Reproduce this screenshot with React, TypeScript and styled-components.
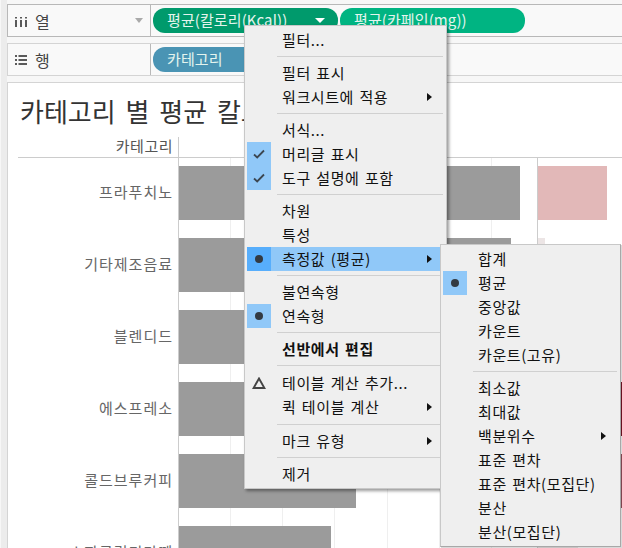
import React, { ReactElement } from 'react';
import styled, { createGlobalStyle } from 'styled-components';

const GlobalStyle = createGlobalStyle`
  html, body {
    margin: 0;
    padding: 0;
    background: #f5f5f5;
  }
  body {
    font-family: "Noto Sans CJK KR", "Noto Sans", sans-serif;
    font-size: 15px;
    overflow: hidden;
  }
`;

type MenuEntry =
  | { sep: true; before?: number; after?: number }
  | { sep?: false; label: string; mark?: 'check' | 'dot' | 'delta'; sub?: boolean; active?: boolean; bold?: boolean };

const mainMenu: MenuEntry[] = [
  { label: '필터...' },
  { sep: true },
  { label: '필터 표시' },
  { label: '워크시트에 적용', sub: true },
  { sep: true },
  { label: '서식...' },
  { label: '머리글 표시', mark: 'check' },
  { label: '도구 설명에 포함', mark: 'check' },
  { sep: true },
  { label: '차원' },
  { label: '특성' },
  { label: '측정값 (평균)', mark: 'dot', sub: true, active: true },
  { sep: true },
  { label: '불연속형' },
  { label: '연속형', mark: 'dot' },
  { sep: true },
  { label: '선반에서 편집', bold: true },
  { sep: true, after: 5 },
  { label: '테이블 계산 추가...', mark: 'delta' },
  { label: '퀵 테이블 계산', sub: true },
  { sep: true, before: 5 },
  { label: '마크 유형', sub: true },
  { sep: true },
  { label: '제거' },
];

const measureMenu: MenuEntry[] = [
  { label: '합계' },
  { label: '평균', mark: 'dot' },
  { label: '중앙값' },
  { label: '카운트' },
  { label: '카운트(고유)' },
  { sep: true },
  { label: '최소값' },
  { label: '최대값' },
  { label: '백분위수', sub: true },
  { label: '표준 편차' },
  { label: '표준 편차(모집단)' },
  { label: '분산' },
  { label: '분산(모집단)' },
];

const rows = [
  { name: '프라푸치노', width: 341, side: 69, sideColor: '#e2b8b8' },
  { name: '기타제조음료', width: 332, side: 7, sideColor: '#ece5e5' },
  { name: '블렌디드', width: 300, side: 40, sideColor: '#ece5e5' },
  { name: '에스프레소', width: 280, side: 90, sideColor: '#7a1525' },
  { name: '콜드브루커피', width: 177, side: 90, sideColor: '#96505c' },
  { name: '스파클링티라떼', width: 152, side: 40, sideColor: '#ece5e5' },
];

const MarkIcon = ({ mark }: { mark: 'check' | 'dot' | 'delta' }): ReactElement => {
  if (mark === 'check') {
    return (
      <svg width="14" height="12" viewBox="0 0 14 12">
        <path d="M2 6.5 L5.2 9.5 L12 2.5" fill="none" stroke="#3c4650" strokeWidth="1.8" />
      </svg>
    );
  }
  if (mark === 'dot') {
    return (
      <svg width="10" height="10" viewBox="0 0 10 10">
        <circle cx="5" cy="5" r="4" fill="#333a42" />
      </svg>
    );
  }
  return (
    <svg width="14" height="12" viewBox="0 0 14 12">
      <path d="M7 1.5 L12.4 11 L1.6 11 Z" fill="none" stroke="#444" strokeWidth="1.9" />
    </svg>
  );
};

const Menu = ({ entries }: { entries: MenuEntry[] }): ReactElement => (
  <>
    {entries.map((entry, i) =>
      entry.sep ? (
        <Separator key={i} $before={entry.before} $after={entry.after} />
      ) : (
        <Item key={i} $active={entry.active}>
          <MarkCell $on={!!entry.mark && entry.mark !== 'delta'} $active={entry.active}>
            {entry.mark && <MarkIcon mark={entry.mark} />}
          </MarkCell>
          <ItemLabel $bold={entry.bold}>{entry.label}</ItemLabel>
          {entry.sub && <SubArrow />}
        </Item>
      ),
    )}
  </>
);

export default function App(): ReactElement {
  return (
    <Page>
      <GlobalStyle />
      <Strip />
      <Main>
        <Shelf $selected>
          <ShelfLabel>
            <svg width="12" height="12" viewBox="0 0 12 12">
              <path d="M0 2h2v1.5H0zM0 5h2v7H0zM5 2h2v1.5H5zM5 5h2v7H5zM10 2h2v1.5h-2zM10 5h2v7h-2z" fill="#5a5a5a" />
            </svg>
            <ShelfName>열</ShelfName>
            <ShelfCaret />
          </ShelfLabel>
          <PillRow>
            <Pill $color="#009a6c" $width={185}>
              평균(칼로리(Kcal))
              <PillArrow />
            </Pill>
            <Pill $color="#00b482" $width={185}>
              평균(카페인(mg))
            </Pill>
          </PillRow>
        </Shelf>
        <Shelf>
          <ShelfLabel>
            <svg width="12" height="12" viewBox="0 0 12 12">
              <path d="M0 1h2v2H0zM3.5 1H12v2H3.5zM0 5h2v2H0zM3.5 5H12v2H3.5zM0 9h2v2H0zM3.5 9H12v2H3.5z" fill="#5a5a5a" />
            </svg>
            <ShelfName>행</ShelfName>
          </ShelfLabel>
          <PillRow>
            <Pill $color="#4a94b4" $width={120}>
              카테고리
            </Pill>
          </PillRow>
        </Shelf>
        <Panel>
          <Title>카테고리 별 평균 칼로리</Title>
          <HeaderRow>
            <HeaderLabel>카테고리</HeaderLabel>
          </HeaderRow>
          {rows.map((row) => (
            <Row key={row.name}>
              <RowLabel>{row.name}</RowLabel>
              <BarPane>
                <Bar style={{ width: row.width }} />
              </BarPane>
              <SidePane>
                <SideBar style={{ width: row.side, background: row.sideColor }} />
              </SidePane>
            </Row>
          ))}
        </Panel>
      </Main>
      <MainMenuBox>
        <Menu entries={mainMenu} />
      </MainMenuBox>
      <SubMenuBox>
        <Menu entries={measureMenu} />
      </SubMenuBox>
    </Page>
  );
}

const Page = styled.div`
  position: relative;
  display: flex;
  width: 622px;
  height: 548px;
  overflow: hidden;
  background: #f7f7f7;
`;

const Strip = styled.div`
  flex: none;
  width: 6px;
  margin-left: 1px;
  background: #ececec;
`;

const Main = styled.div`
  flex: 1;
  min-width: 0;
  display: flex;
  flex-direction: column;
  gap: 6px;
  padding-top: 4px;
`;

const Shelf = styled.div<{ $selected?: boolean }>`
  flex: none;
  display: flex;
  height: 33px;
  box-sizing: border-box;
  border: 1px solid ${(p) => (p.$selected ? '#b8b8b8' : '#d4d4d4')};
  border-right: none;
  background: #f9f9f9;
`;

const ShelfLabel = styled.div`
  flex: none;
  display: flex;
  align-items: center;
  width: 143px;
  box-sizing: border-box;
  padding-left: 7px;
  border-right: 1px solid #b8b8b8;
  color: #444;
`;

const ShelfName = styled.span`
  margin-left: 8px;
  font-size: 16px;
`;

const ShelfCaret = styled.span`
  margin-left: auto;
  margin-right: 7px;
  width: 0;
  height: 0;
  border-left: 4px solid transparent;
  border-right: 4px solid transparent;
  border-top: 5px solid #aaa;
`;

const PillRow = styled.div`
  display: flex;
  align-items: center;
  gap: 2px;
  padding-left: 2px;
`;

const Pill = styled.div<{ $color: string; $width: number }>`
  position: relative;
  display: flex;
  align-items: center;
  width: ${(p) => p.$width}px;
  height: 25px;
  box-sizing: border-box;
  padding: 0 0 2px 14px;
  border-radius: 12px;
  background: ${(p) => p.$color};
  color: #e4f4ee;
  font-size: 15px;
  letter-spacing: 0.1px;
  white-space: nowrap;
`;

const PillArrow = styled.span`
  position: absolute;
  right: 13px;
  top: 10px;
  width: 0;
  height: 0;
  border-left: 5px solid transparent;
  border-right: 5px solid transparent;
  border-top: 5px solid #fff;
`;

const Panel = styled.div`
  flex: 1;
  min-height: 0;
  box-sizing: border-box;
  padding-left: 10px;
  border: 1px solid #d4d4d4;
  border-right: none;
  border-bottom: none;
  background: #fff;
`;

const Title = styled.div`
  height: 54px;
  padding: 11px 0 0 2px;
  box-sizing: border-box;
  color: #333;
  font-size: 26px;
  line-height: 34px;
  word-spacing: 4px;
  white-space: nowrap;
`;

const HeaderRow = styled.div`
  display: flex;
  height: 21px;
  box-sizing: border-box;
  border-bottom: 1px solid #ccc;
`;

const HeaderLabel = styled.div`
  flex: none;
  width: 161px;
  box-sizing: border-box;
  padding-right: 5px;
  border-right: 1px solid #ccc;
  color: #555;
  font-size: 15px;
  letter-spacing: 0.5px;
  line-height: 18px;
  text-align: right;
`;

const Row = styled.div`
  display: flex;
  height: 72px;
`;

const RowLabel = styled.div`
  flex: none;
  display: flex;
  align-items: center;
  justify-content: flex-end;
  width: 161px;
  box-sizing: border-box;
  padding: 0 5px 6px 0;
  border-right: 1px solid #ccc;
  color: #666;
  font-size: 15px;
  letter-spacing: 1px;
`;

const BarPane = styled.div`
  flex: none;
  width: 359px;
  box-sizing: border-box;
  padding-top: 8px;
  border-right: 1px solid #ccc;
  background: repeating-linear-gradient(to right, transparent 0 51px, #efefef 51px 52px, transparent 52px 52.2px);
`;

const Bar = styled.div`
  height: 54px;
  background: #9b9b9b;
`;

const SidePane = styled.div`
  flex: 1;
  padding-top: 8px;
`;

const SideBar = styled.div`
  height: 54px;
`;

const MainMenuBox = styled.div`
  position: absolute;
  left: 244px;
  top: 25px;
  width: 203px;
  height: 464px;
  box-sizing: border-box;
  padding: 2px 0 0 2px;
  border: 1px solid #c8c8c8;
  background: #efefef;
  box-shadow: 2px 2px 3px rgba(0, 0, 0, 0.4);
`;

const SubMenuBox = styled(MainMenuBox)`
  left: 440px;
  top: 244px;
  width: 181px;
  height: 303px;
  border-right-color: #a8a8a8;
  border-bottom-color: #a8a8a8;
  box-shadow: 1px 1px 0 rgba(0, 0, 0, 0.15);
`;

const Item = styled.div<{ $active?: boolean }>`
  display: flex;
  align-items: center;
  height: 24px;
  background: ${(p) => (p.$active ? '#90c8f8' : 'transparent')};
  color: #111;
`;

const MarkCell = styled.div<{ $on: boolean; $active?: boolean }>`
  flex: none;
  display: flex;
  align-items: center;
  justify-content: center;
  width: 24px;
  height: 24px;
  background: ${(p) => (p.$active ? '#57aefc' : p.$on ? '#90c8f8' : 'transparent')};
`;

const ItemLabel = styled.span<{ $bold?: boolean }>`
  margin-left: 11px;
  padding-bottom: 2px;
  font-size: 15px;
  font-weight: ${(p) => (p.$bold ? 700 : 400)};
  letter-spacing: 0.6px;
  word-spacing: 1.5px;
  white-space: nowrap;
`;

const SubArrow = styled.span`
  margin-left: auto;
  margin-right: 14px;
  width: 0;
  height: 0;
  border-top: 4px solid transparent;
  border-bottom: 4px solid transparent;
  border-left: 5px solid #111;
`;

const Separator = styled.div<{ $before?: number; $after?: number }>`
  height: 1px;
  margin: ${(p) => p.$before ?? 4}px 3px ${(p) => p.$after ?? 4}px 30px;
  background: #d0d0d0;
`;
